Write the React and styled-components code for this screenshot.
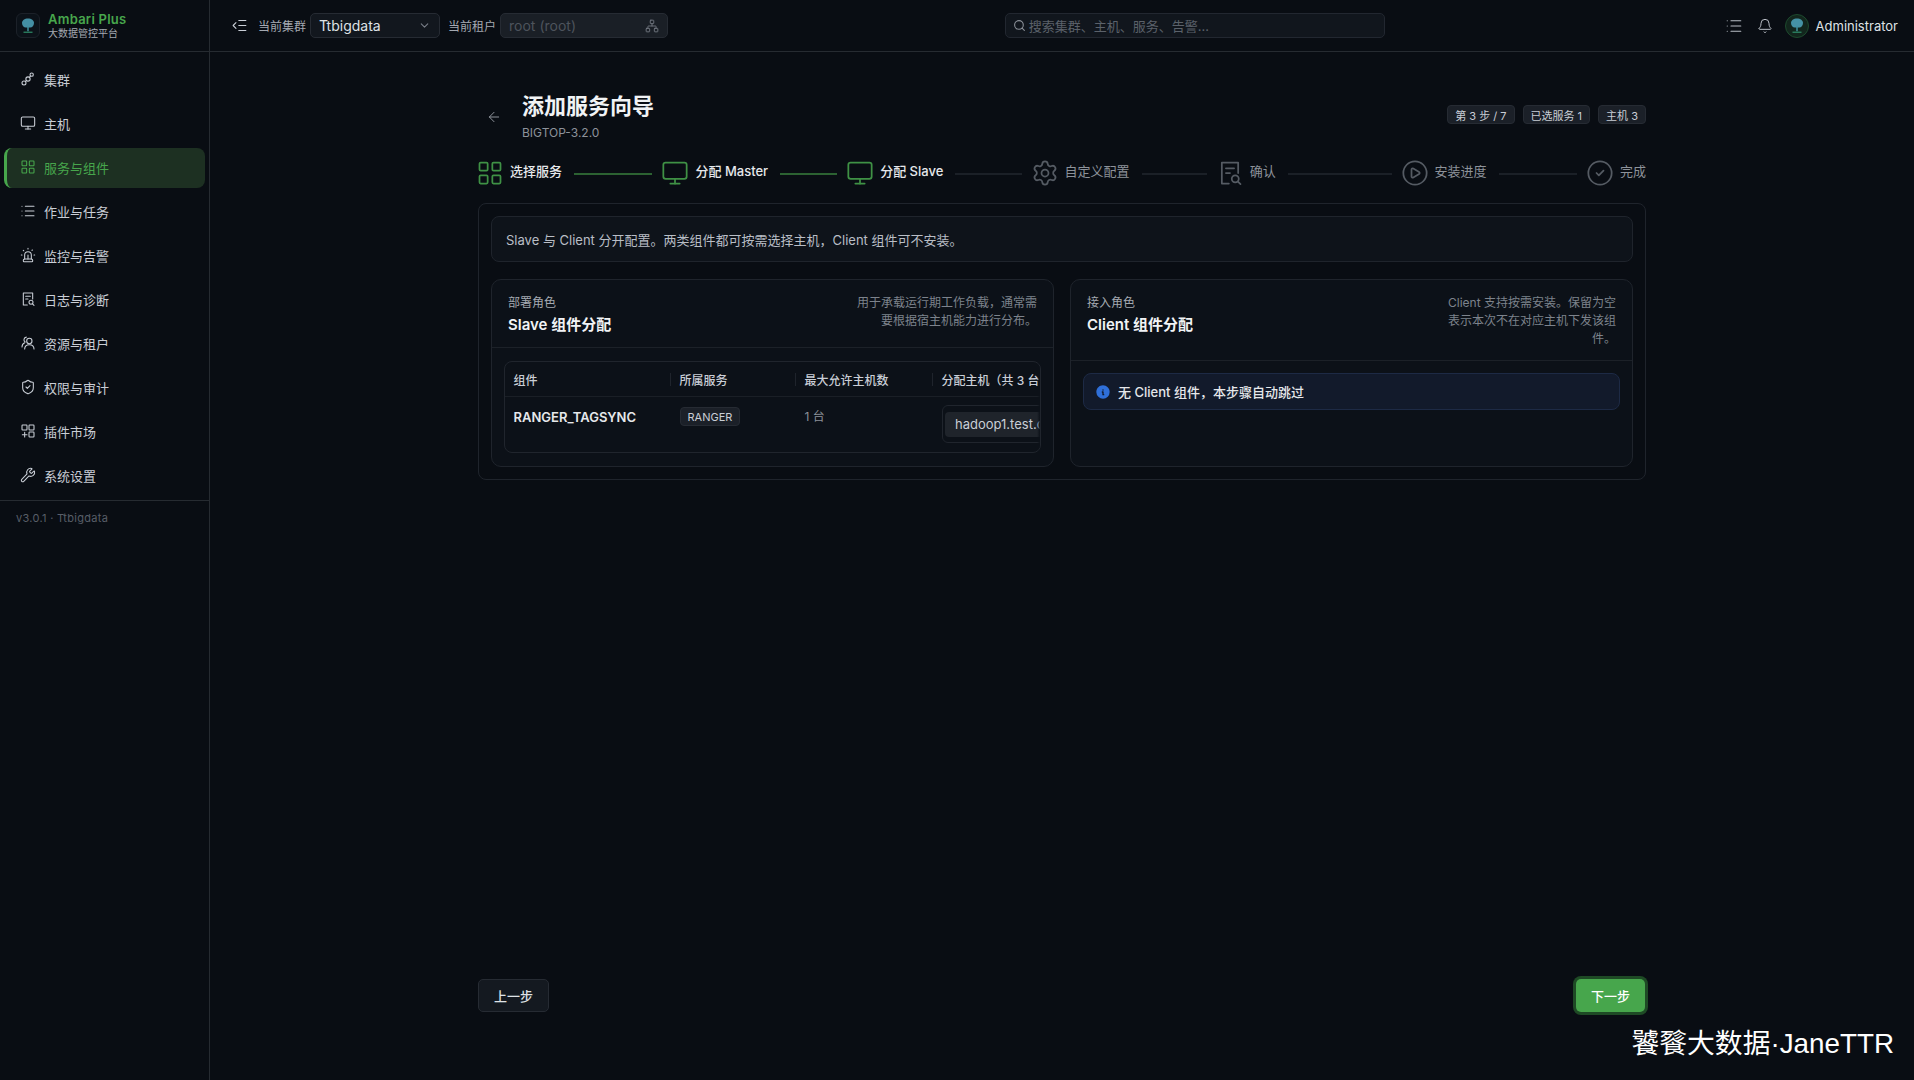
import React from "react";
import styled, { createGlobalStyle } from "styled-components";
import {
  LayoutGrid, Monitor, List, Siren, ShieldCheck, Wrench, IndentDecrease, ChevronDown, Network,
  Search, Bell, ArrowLeft, Settings, CirclePlay, CircleCheck,
} from "lucide-react";
import { TbInfoCircleFilled } from "react-icons/tb";

const Global = createGlobalStyle`
  html, body { margin: 0; padding: 0; background: #090d13; overflow: hidden; }
  body { font-family: Inter, "Noto Sans CJK SC", sans-serif; color: #e6e8eb; }
  * { box-sizing: border-box; }
`;

const Shell = styled.div`
  position: relative;
  display: flex;
  flex-direction: column;
  width: 1914px;
  height: 1080px;
  background: #090d13;
`;
const TopBar = styled.header`
  display: flex;
  align-items: center;
  height: 52px;
  flex: none;
  border-bottom: 1px solid #262b31;
`;
const Brand = styled.div`
  display: flex;
  align-items: center;
  gap: 8px;
  width: 210px;
  height: 100%;
  padding-left: 16px;
  border-right: 1px solid #262b31;
`;
const LogoBox = styled.div`
  display: flex;
  align-items: center;
  justify-content: center;
  width: 24px;
  height: 25px;
  border: 1px solid #1c2129;
  border-radius: 6px;
  background: #0c1219;
`;
const BrandText = styled.div`
  display: flex;
  flex-direction: column;
`;
const BrandName = styled.span`
  font-size: 13px;
  line-height: 16px;
  font-weight: 600;
  letter-spacing: 0.25px;
  color: #47a64c;
`;
const BrandSub = styled.span`
  font-size: 10px;
  line-height: 13px;
  color: #a4a9b1;
`;
const TopMain = styled.div`
  flex: 1;
  display: flex;
  align-items: center;
  padding: 0 16px 0 21px;
`;
const Collapse = styled.span`
  display: flex;
  color: #c9ced6;
  margin-right: 10px;
`;
const FieldLabel = styled.span`
  font-size: 12px;
  color: #a4a9b1;
  margin-right: 4px;
  white-space: nowrap;
`;
const SelectBox = styled.div`
  display: flex;
  align-items: center;
  justify-content: space-between;
  width: ${(p) => p.$w}px;
  height: 25px;
  padding: 0 8px;
  margin-right: 8px;
  border-radius: 5px;
  border: 1px solid #262b33;
  background: ${(p) => (p.$disabled ? "#1a1f26" : "#12171e")};
  font-size: 14px;
  color: ${(p) => (p.$disabled ? "#4d535c" : "#dfe2e6")};
  svg { color: #777d86; }
`;
const SearchWrap = styled.div`
  flex: 1;
  display: flex;
  justify-content: center;
  padding-right: 11px;
`;
const SearchBox = styled.div`
  display: flex;
  align-items: center;
  gap: 3px;
  width: 380px;
  height: 25px;
  padding: 0 7px;
  border-radius: 5px;
  border: 1px solid #222730;
  background: #11161d;
  font-size: 13px;
  color: #5b616a;
  svg { color: #8d929a; }
`;
const UserArea = styled.div`
  display: flex;
  align-items: center;
  color: #b9bec6;
`;
const BellSlot = styled.span`
  display: flex;
  margin: 0 12px 0 14px;
`;
const UserName = styled.span`
  margin-left: 7px;
  font-size: 13px;
  color: #dfe2e6;
`;
const AvatarCircle = styled.span`
  display: flex;
  align-items: center;
  justify-content: center;
  width: 24px;
  height: 24px;
  border-radius: 50%;
  background: #12261d;
  border: 1px solid #1d4a2e;
`;
const Body = styled.div`
  flex: 1;
  display: flex;
  min-height: 0;
`;
const Sidebar = styled.aside`
  width: 210px;
  flex: none;
  border-right: 1px solid #262b31;
`;
const Nav = styled.nav`
  display: flex;
  flex-direction: column;
  gap: 4px;
  padding: 8px 4px 4px;
  border-bottom: 1px solid #262b31;
`;
const NavItem = styled.div`
  display: flex;
  align-items: center;
  gap: 8px;
  height: 40px;
  width: 201px;
  padding-left: ${(p) => (p.$active ? 13 : 16)}px;
  padding-bottom: 2px;
  font-size: 13px;
  border-radius: 8px;
  color: ${(p) => (p.$active ? "#47a64c" : "#c9ced6")};
  background: ${(p) => (p.$active ? "#1d3022" : "transparent")};
  border-left: ${(p) => (p.$active ? "3px solid #47a64c" : "none")};
`;
const Version = styled.div`
  padding: 9px 16px;
  font-size: 11px;
  line-height: 16px;
  letter-spacing: 0.3px;
  color: #585e68;
`;
const Main = styled.main`
  flex: 1;
  display: flex;
  flex-direction: column;
  align-items: center;
  padding: 40px 0 68px;
`;
const Page = styled.div`
  width: 1168px;
  flex: 1;
  display: flex;
  flex-direction: column;
`;
const PageHead = styled.div`
  display: flex;
  align-items: center;
  justify-content: space-between;
`;
const HeadLeft = styled.div`
  display: flex;
  align-items: center;
  gap: 12px;
`;
const BackButton = styled.span`
  display: flex;
  align-items: center;
  justify-content: center;
  width: 32px;
  height: 32px;
  color: #8d929a;
`;
const TitleBlock = styled.div`
  display: flex;
  flex-direction: column;
`;
const Title = styled.h1`
  margin: 0;
  font-size: 22px;
  line-height: 29px;
  font-weight: 600;
  color: #f1f3f5;
`;
const Subtitle = styled.span`
  margin-top: 4px;
  font-size: 12px;
  line-height: 16px;
  color: #8d929a;
`;
const Tags = styled.div`
  display: flex;
  align-self: flex-start;
  gap: 8px;
  margin-top: 13px;
`;
const Tag = styled.span`
  display: inline-flex;
  align-items: center;
  height: 19px;
  padding: 0 7px;
  border-radius: 4px;
  border: 1px solid #262b33;
  background: #1b2028;
  font-size: 11px;
  color: #c9ced6;
  white-space: nowrap;
`;
const Steps = styled.div`
  display: flex;
  align-items: center;
  height: 32px;
  margin: 16px 0 14px -2px;
`;
const StepIcon = styled.span`
  display: flex;
  margin-top: -1px;
  color: ${(p) => (p.$done ? "#3f9145" : "#555b63")};
`;
const StepLabel = styled.span`
  margin: -5px 0 0 6px;
  font-size: 13px;
  font-weight: ${(p) => (p.$done ? 500 : 400)};
  color: ${(p) => (p.$done ? "#e6e8eb" : "#8d929a")};
  white-space: nowrap;
`;
const StepLine = styled.span`
  flex: ${(p) => p.$grow} 1 0;
  height: 2px;
  margin: 2px 9px 0 12px;
  background: ${(p) => (p.$done ? "#2c6232" : "#1b2027")};
`;
const Card = styled.section`
  display: flex;
  flex-direction: column;
  gap: 17px;
  padding: 12px;
  border: 1px solid #1f242c;
  border-radius: 8px;
`;
const Notice = styled.div`
  display: flex;
  align-items: center;
  height: 46px;
  padding: 0 14px;
  border: 1px solid #1f242c;
  border-radius: 8px;
  background: #0e131a;
  font-size: 13px;
  color: #b9bec6;
`;
const Panels = styled.div`
  display: grid;
  grid-template-columns: minmax(0, 1fr) minmax(0, 1fr);
  gap: 16px;
`;
const Panel = styled.div`
  display: flex;
  flex-direction: column;
  min-width: 0;
  border: 1px solid #1f242c;
  border-radius: 10px;
  background: #0c1118;
`;
const PanelHead = styled.div`
  display: flex;
  justify-content: space-between;
  padding: 14px 16px 12px;
  border-bottom: 1px solid #1c2128;
`;
const HeadText = styled.div`
  display: flex;
  flex-direction: column;
  gap: 3px;
`;
const Eyebrow = styled.span`
  font-size: 12px;
  line-height: 18px;
  color: #a4a9b1;
`;
const PanelTitle = styled.span`
  font-size: 15px;
  line-height: 20px;
  font-weight: 600;
  color: #f1f3f5;
`;
const PanelDesc = styled.p`
  margin: 0;
  width: ${(p) => p.$w}px;
  text-align: right;
  font-size: 12px;
  line-height: 18px;
  color: #7d838c;
`;
const PanelBody = styled.div`
  padding: 13px 12px;
`;
const TableWrap = styled.div`
  position: relative;
  height: 92px;
  border: 1px solid #20252d;
  border-radius: 8px;
  overflow: hidden;
  &::after {
    content: "";
    position: absolute;
    top: 0;
    right: 0;
    bottom: 0;
    width: 3px;
    background: linear-gradient(to right, rgba(12, 17, 24, 0), #0c1118);
  }
`;
const Row = styled.div`
  display: grid;
  grid-template-columns: 166px 125px 137px 260px;
  width: 688px;
  ${(p) => (p.$head ? "height: 35px; align-items: center; border-bottom: 1px solid #1a1f26;" : "")}
`;
const HeadCell = styled.div`
  position: relative;
  padding: 0 8.5px;
  font-size: 12px;
  font-weight: 500;
  color: #c9ced6;
  white-space: nowrap;
  &:not(:last-child)::after {
    content: "";
    position: absolute;
    right: 0;
    top: 2px;
    bottom: 2px;
    width: 1px;
    background: #1f242c;
  }
`;
const Cell = styled.div`
  padding: 10px 8.5px;
  font-size: ${(p) => (p.$strong ? 13 : 12)}px;
  font-weight: ${(p) => (p.$strong ? 600 : 400)};
  line-height: 20px;
  color: ${(p) => (p.$strong ? "#e6e8eb" : "#8d929a")};
  white-space: nowrap;
`;
const ServiceTag = styled(Tag)`
  vertical-align: top;
`;
const HostSelect = styled.div`
  display: flex;
  align-items: center;
  height: 38px;
  padding: 0 2px;
  border: 1px solid #20252d;
  border-radius: 6px;
  width: 240px;
`;
const HostChip = styled.span`
  display: inline-flex;
  align-items: center;
  height: 25px;
  padding: 0 10px;
  border-radius: 4px;
  background: #1f242b;
  font-size: 13px;
  color: #c9ced6;
  white-space: nowrap;
`;
const HostCell = styled.div`
  padding: 8px 9px;
`;
const Alert = styled.div`
  display: flex;
  align-items: center;
  gap: 7px;
  height: 37px;
  margin-top: -1px;
  padding: 0 11px;
  border: 1px solid #1d2a45;
  border-radius: 8px;
  background: #121a2b;
  font-size: 13px;
  font-weight: 500;
  color: #e6e8eb;
  svg { color: #2f6fd8; }
`;
const Footer = styled.div`
  margin-top: auto;
  display: flex;
  align-items: center;
  justify-content: space-between;
`;
const PrevButton = styled.button`
  height: 33px;
  width: 71px;
  border: 1px solid #262b33;
  border-radius: 5px;
  background: #141920;
  color: #dfe2e6;
  font: 500 13px Inter, "Noto Sans CJK SC", sans-serif;
`;
const NextButton = styled.button`
  height: 33px;
  width: 69px;
  margin-right: 1px;
  border: none;
  border-radius: 5px;
  background: #47a64c;
  box-shadow: 0 0 0 3px #1e4a25;
  color: #ffffff;
  font: 500 13px Inter, "Noto Sans CJK SC", sans-serif;
`;
const Watermark = styled.div`
  position: absolute;
  right: 20px;
  bottom: 18px;
  font-family: "Liberation Sans", "Noto Sans CJK SC", sans-serif;
  font-size: 27.8px;
  line-height: 36px;
  color: #ffffff;
  white-space: nowrap;
`;

const TreeLogo = ({ size = 18 }) => (
  <svg width={size} height={size} viewBox="0 0 24 24" fill="none">
    <path d="M12 2c-4.6 0-8 2.4-8 6 0 3.4 2.4 6 5 6h6c2.6 0 5-2.6 5-6 0-3.6-3.4-6-8-6z" fill="#4fa6bd" opacity=".85" />
    <path d="M11 12h2v7h-2z" fill="#3f8f9c" />
    <path d="M6 19.5h12v1.6H6z" fill="#2f8f6a" />
  </svg>
);

const Glyph = ({ size = 16, sw = 1.6, children }) => (
  <svg width={size} height={size} viewBox="0 0 24 24" fill="none" stroke="currentColor" strokeWidth={sw} strokeLinecap="round" strokeLinejoin="round">
    {children}
  </svg>
);

const ClusterIcon = () => (
  <Glyph>
    <circle cx="17.5" cy="5.5" r="2.5" />
    <circle cx="12" cy="12" r="3.2" />
    <circle cx="6" cy="18" r="3" />
    <path d="M15.6 7.6l-1.4 1.8M9.8 14.2l-1.7 1.7" />
  </Glyph>
);
const ReportIcon = ({ size, sw }) => (
  <Glyph size={size} sw={sw}>
    <path d="M11 21H5V3h14v9" />
    <path d="M8.5 8h7M8.5 12h3.5" />
    <circle cx="16.5" cy="17" r="3" />
    <path d="M18.8 19.3L21 21.5" />
  </Glyph>
);
const PeopleIcon = () => (
  <Glyph>
    <circle cx="14" cy="9" r="4" />
    <path d="M7 21c0-4 3-6.5 7-6.5s7 2.5 7 6.5" />
    <path d="M9.5 3.2a4 4 0 0 0-1.8 7.3" />
    <path d="M3 18c0-3 1.5-5.4 4-6.4" />
  </Glyph>
);
const PluginIcon = () => (
  <Glyph>
    <rect x="3" y="3" width="7.5" height="7.5" rx="1" />
    <rect x="13.5" y="3" width="7.5" height="7.5" rx="1" />
    <rect x="13.5" y="13.5" width="7.5" height="7.5" rx="1" />
    <path d="M7 14v7M3.5 17.5h7" />
  </Glyph>
);

const navItems = [
  ["集群", <ClusterIcon />],
  ["主机", <Monitor size={16} strokeWidth={1.6} />],
  ["服务与组件", <LayoutGrid size={16} strokeWidth={1.6} />, true],
  ["作业与任务", <List size={16} strokeWidth={1.6} />],
  ["监控与告警", <Siren size={16} strokeWidth={1.6} />],
  ["日志与诊断", <ReportIcon />],
  ["资源与租户", <PeopleIcon />],
  ["权限与审计", <ShieldCheck size={16} strokeWidth={1.6} />],
  ["插件市场", <PluginIcon />],
  ["系统设置", <Wrench size={16} strokeWidth={1.6} />],
];

const stepIcon = (Icon) => <Icon size={28} strokeWidth={1.5} />;

const steps = [
  { label: "选择服务", icon: stepIcon(LayoutGrid), done: true, lineDone: true, grow: 77 },
  { label: "分配 Master", icon: stepIcon(Monitor), done: true, lineDone: true, grow: 56 },
  { label: "分配 Slave", icon: stepIcon(Monitor), done: true, grow: 65 },
  { label: "自定义配置", icon: stepIcon(Settings), grow: 64 },
  { label: "确认", icon: <ReportIcon size={28} sw={1.5} />, grow: 102 },
  { label: "安装进度", icon: stepIcon(CirclePlay), grow: 77 },
  { label: "完成", icon: stepIcon(CircleCheck) },
];

const noticeText = "Slave 与 Client 分开配置。两类组件都可按需选择主机\uFF0CClient 组件可不安装。";
const slaveDesc = "用于承载运行期工作负载\uFF0C通常需要根据宿主机能力进行分布。";
const hostHead = "分配主机\uFF08共 3 台\uFF09";
const alertText = "无 Client 组件\uFF0C本步骤自动跳过";

export default function App() {
  return (
    <Shell>
      <Global />
      <TopBar>
        <Brand>
          <LogoBox><TreeLogo size={18} /></LogoBox>
          <BrandText>
            <BrandName>Ambari Plus</BrandName>
            <BrandSub>大数据管控平台</BrandSub>
          </BrandText>
        </Brand>
        <TopMain>
          <Collapse><IndentDecrease size={17} strokeWidth={1.5} /></Collapse>
          <FieldLabel>当前集群</FieldLabel>
          <SelectBox $w={130}>Ttbigdata<ChevronDown size={13} /></SelectBox>
          <FieldLabel>当前租户</FieldLabel>
          <SelectBox $w={168} $disabled>root (root)<Network size={14} strokeWidth={1.5} /></SelectBox>
          <SearchWrap>
            <SearchBox><Search size={13} />搜索集群、主机、服务、告警...</SearchBox>
          </SearchWrap>
          <UserArea>
            <List size={18} strokeWidth={1.5} />
            <BellSlot><Bell size={16} strokeWidth={1.5} /></BellSlot>
            <AvatarCircle><TreeLogo size={18} /></AvatarCircle>
            <UserName>Administrator</UserName>
          </UserArea>
        </TopMain>
      </TopBar>
      <Body>
        <Sidebar>
          <Nav>
            {navItems.map(([label, icon, active]) => (
              <NavItem key={label} $active={active}>{icon}{label}</NavItem>
            ))}
          </Nav>
          <Version>v3.0.1 · Ttbigdata</Version>
        </Sidebar>
        <Main>
          <Page>
            <PageHead>
              <HeadLeft>
                <BackButton><ArrowLeft size={16} strokeWidth={1.5} /></BackButton>
                <TitleBlock>
                  <Title>添加服务向导</Title>
                  <Subtitle>BIGTOP-3.2.0</Subtitle>
                </TitleBlock>
              </HeadLeft>
              <Tags>
                <Tag>第 3 步 / 7</Tag>
                <Tag>已选服务 1</Tag>
                <Tag>主机 3</Tag>
              </Tags>
            </PageHead>
            <Steps>
              {steps.map(({ label, icon, done, lineDone, grow }) => (
                <React.Fragment key={label}>
                  <StepIcon $done={done}>{icon}</StepIcon>
                  <StepLabel $done={done}>{label}</StepLabel>
                  {grow && <StepLine $done={lineDone} $grow={grow} />}
                </React.Fragment>
              ))}
            </Steps>
            <Card>
              <Notice>{noticeText}</Notice>
              <Panels>
                <Panel>
                  <PanelHead>
                    <HeadText>
                      <Eyebrow>部署角色</Eyebrow>
                      <PanelTitle>Slave 组件分配</PanelTitle>
                    </HeadText>
                    <PanelDesc $w={180}>{slaveDesc}</PanelDesc>
                  </PanelHead>
                  <PanelBody>
                    <TableWrap>
                      <Row $head>
                        <HeadCell>组件</HeadCell>
                        <HeadCell>所属服务</HeadCell>
                        <HeadCell>最大允许主机数</HeadCell>
                        <HeadCell>{hostHead}</HeadCell>
                      </Row>
                      <Row>
                        <Cell $strong>RANGER_TAGSYNC</Cell>
                        <Cell><ServiceTag>RANGER</ServiceTag></Cell>
                        <Cell>1 台</Cell>
                        <HostCell>
                          <HostSelect><HostChip>hadoop1.test.com</HostChip></HostSelect>
                        </HostCell>
                      </Row>
                    </TableWrap>
                  </PanelBody>
                </Panel>
                <Panel>
                  <PanelHead>
                    <HeadText>
                      <Eyebrow>接入角色</Eyebrow>
                      <PanelTitle>Client 组件分配</PanelTitle>
                    </HeadText>
                    <PanelDesc $w={172}>Client 支持按需安装。保留为空表示本次不在对应主机下发该组件。</PanelDesc>
                  </PanelHead>
                  <PanelBody>
                    <Alert><TbInfoCircleFilled size={16} />{alertText}</Alert>
                  </PanelBody>
                </Panel>
              </Panels>
            </Card>
            <Footer>
              <PrevButton>上一步</PrevButton>
              <NextButton>下一步</NextButton>
            </Footer>
          </Page>
        </Main>
      </Body>
      <Watermark>饕餮大数据·JaneTTR</Watermark>
    </Shell>
  );
}
